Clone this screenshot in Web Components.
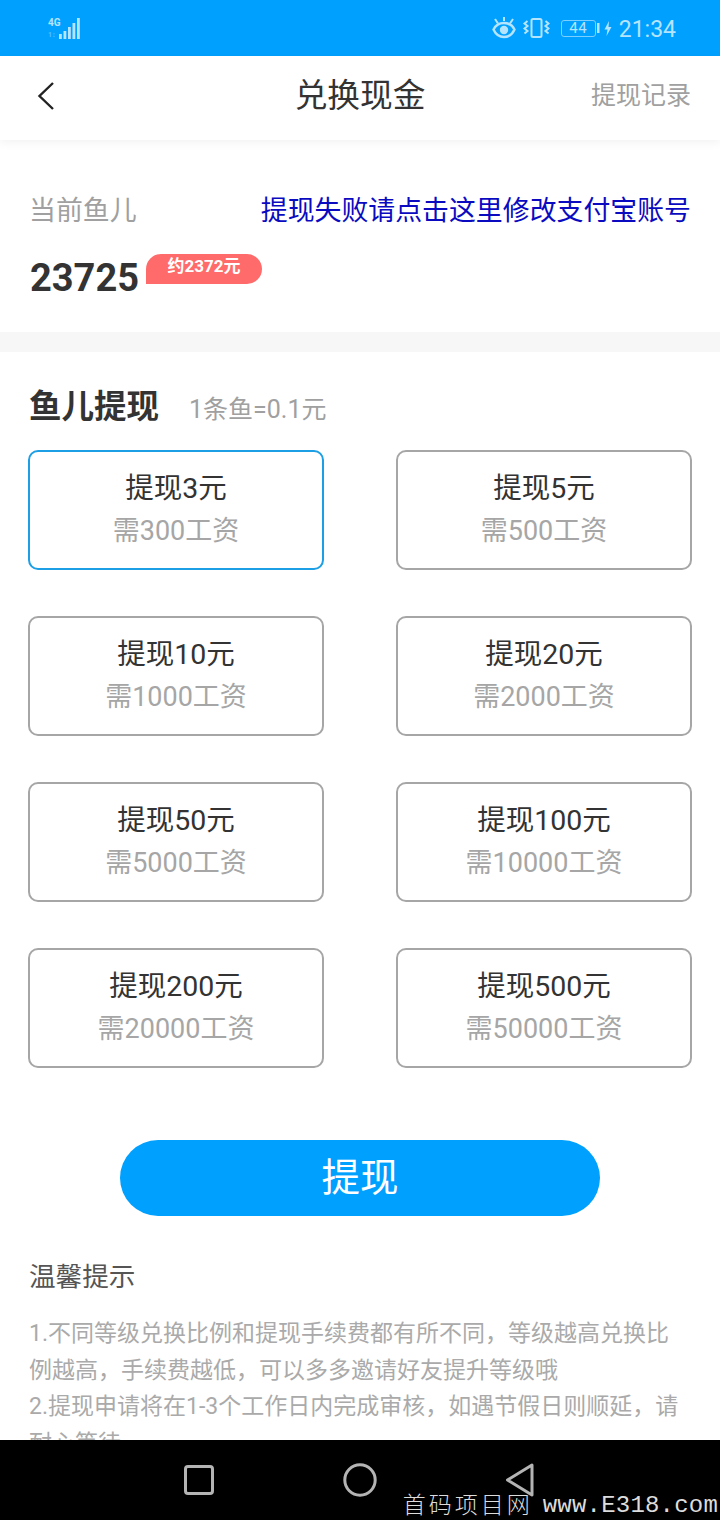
<!DOCTYPE html>
<html lang="zh">
<head>
<meta charset="utf-8">
<title>兑换现金</title>
<style>
  html, body { margin: 0; padding: 0; background: #fff; }
  body { font-family: Roboto, "Noto Sans CJK SC", sans-serif; }
</style>
</head>
<body>
<cash-page>
  <status-bar slot="status"></status-bar>
  <nav-header slot="header" title="兑换现金" action="提现记录"></nav-header>
  <balance-panel amount="23725" approx="约2372元"></balance-panel>
  <withdraw-options>
    <option-card title="提现3元" cost="需300工资" selected></option-card>
    <option-card title="提现5元" cost="需500工资"></option-card>
    <option-card title="提现10元" cost="需1000工资"></option-card>
    <option-card title="提现20元" cost="需2000工资"></option-card>
    <option-card title="提现50元" cost="需5000工资"></option-card>
    <option-card title="提现100元" cost="需10000工资"></option-card>
    <option-card title="提现200元" cost="需20000工资"></option-card>
    <option-card title="提现500元" cost="需50000工资"></option-card>
  </withdraw-options>
  <tips-panel>
    <div>1.不同等级兑换比例和提现手续费都有所不同，等级越高兑换比例越高，手续费越低，可以多多邀请好友提升等级哦</div>
    <div>2.提现申请将在1-3个工作日内完成审核，如遇节假日则顺延，请耐心等待</div>
  </tips-panel>
  <system-nav slot="nav"></system-nav>
</cash-page>

<script>
class CashPage extends HTMLElement {
  connectedCallback() {
    this.attachShadow({ mode: 'open' });
    this.shadowRoot.innerHTML = `
      <style>
        :host { display: flex; flex-direction: column; width: 720px; height: 1520px; overflow: hidden; position: relative; background: #fff; }
        .content { flex: 1; min-height: 0; overflow: hidden; }
      </style>
      <slot name="status"></slot>
      <slot name="header"></slot>
      <div class="content"><slot></slot></div>
      <slot name="nav"></slot>
    `;
  }
}

class StatusBar extends HTMLElement {
  connectedCallback() {
    this.attachShadow({ mode: 'open' });
    this.shadowRoot.innerHTML = `
      <style>
        :host { display: flex; align-items: center; justify-content: space-between; height: 56px; padding: 0 44px 0 48px; background: #00a0ff; color: #b5e4ff; flex: none; }
        .signal { display: flex; align-items: flex-end; height: 21px; }
        .net { display: flex; flex-direction: column; justify-content: space-between; height: 21px; font: 700 10px/10px Roboto, sans-serif; width: 11px; }
        .net span + span { opacity: .45; font-size: 7px; line-height: 7px; }
        .right { display: flex; align-items: center; height: 56px; }
        .batt { display: flex; align-items: center; margin: 0 0 0 11px; }
        .cell { box-sizing: border-box; width: 35px; height: 17px; border: 1px solid #7cd0ff; border-radius: 3px; font: 15px/15px Roboto, sans-serif; text-align: center; letter-spacing: .5px; }
        .time { font: 23px/52px Roboto, sans-serif; padding-top: 4px; margin-left: 7px; }
        svg { display: block; }
      </style>
      <div class="signal">
        <div class="net"><span>4G</span><span>1↕</span></div>
        <svg width="21" height="21" viewBox="0 0 21 21" fill="#b5e4ff">
          <rect x="0" y="16" width="2.800" height="5"/><rect x="4.500" y="13" width="2.800" height="8"/>
          <rect x="9" y="9" width="2.800" height="12"/><rect x="13.500" y="5" width="2.800" height="16"/>
          <rect x="18" y="0" width="2.800" height="21"/>
        </svg>
      </div>
      <div class="right">
        <svg width="24" height="22" viewBox="0 0 24 22" fill="none" stroke="#b5e4ff" stroke-width="2.400">
          <path d="M1.500 12.500C4 7.500 8 6 12 6s8 1.500 10.500 6.500C20 18 16 20 12 20s-8-2-10.500-7.500z"/>
          <circle cx="12" cy="13" r="4.200" fill="#b5e4ff" stroke="none"/>
          <path d="M3 2 6 6.500M21 2 18 6.500M12 0v4" stroke-width="2"/>
        </svg>
        <svg width="28" height="22" viewBox="0 0 28 22" fill="none" stroke="#b5e4ff" stroke-width="2" style="margin-left:6px">
          <rect x="9.500" y="2" width="10" height="18" rx="1.500"/>
          <path d="M5.500 4 2.500 6.500 5.500 9 2.500 11.500 5.500 14 2.500 16.500M23.500 4l3 2.500L23.500 9l3 2.500L23.500 14l3 2.500"/>
        </svg>
        <div class="batt">
          <div class="cell">44</div>
          <svg width="4" height="10" style="margin-left:1px"><rect width="2.500" height="10" fill="#b5e4ff"/></svg>
          <svg width="8" height="15" viewBox="0 0 8 15" fill="#b5e4ff" style="margin-left:3px"><path d="M5 0 .5 8.500h3L2.500 15 7.500 6h-3z"/></svg>
        </div>
        <span class="time">21:34</span>
      </div>
    `;
  }
}

class NavHeader extends HTMLElement {
  connectedCallback() {
    this.attachShadow({ mode: 'open' });
    this.shadowRoot.innerHTML = `
      <style>
        :host { display: grid; grid-template-columns: 1fr auto 1fr; align-items: center; box-sizing: border-box; height: 84px; padding: 0 29px 4px; background: #fff; box-shadow: 0 2px 10px rgba(0,0,0,.06); position: relative; z-index: 1; flex: none; }
        h1 { margin: 0; font: 400 32.700px/44px Roboto, "Noto Sans CJK SC", sans-serif; color: #333; }
        .action { justify-self: end; font-size: 25px; line-height: 36px; color: #a0a0a0; }
        svg { display: block; margin-left: 7px; }
      </style>
      <svg width="20" height="30" viewBox="0 0 20 30" fill="none" stroke="#222" stroke-width="2.400"><path d="M17 2 3.500 15 17 28"/></svg>
      <h1>${this.getAttribute('title')}</h1>
      <div class="action">${this.getAttribute('action')}</div>
    `;
  }
}

class BalancePanel extends HTMLElement {
  connectedCallback() {
    this.attachShadow({ mode: 'open' });
    this.shadowRoot.innerHTML = `
      <style>
        :host { display: block; box-sizing: border-box; height: 212px; padding: 48px 30px 0; border-bottom: 20px solid #f7f7f7; }
        .top { display: flex; justify-content: space-between; align-items: center; height: 40px; margin: 0 -1px; font-size: 26.900px; }
        .label { color: #a0a0a0; }
        .link { color: #0a0ac0; }
        .row { display: flex; align-items: flex-start; margin-top: 26px; }
        .amount { font: 700 38px/46px Roboto, sans-serif; color: #333; margin-top: 1px; }
        .badge { box-sizing: border-box; width: 116px; height: 30px; margin-left: 7px; border-radius: 15px 15px 15px 0; background: #ff6b6b; color: #fff; font-size: 17px; font-weight: 700; line-height: 24px; text-align: center; }
      </style>
      <div class="top"><span class="label">当前鱼儿</span><span class="link">提现失败请点击这里修改支付宝账号</span></div>
      <div class="row"><span class="amount">${this.getAttribute('amount')}</span><span class="badge">${this.getAttribute('approx')}</span></div>
    `;
  }
}

class WithdrawOptions extends HTMLElement {
  connectedCallback() {
    this.attachShadow({ mode: 'open' });
    this.shadowRoot.innerHTML = `
      <style>
        :host { display: block; padding: 30px 28px 0; }
        .head { display: flex; align-items: center; height: 50px; padding-left: 1px; }
        h2 { margin: 0; font: 700 32.500px/50px Roboto, "Noto Sans CJK SC", sans-serif; color: #333; }
        .rate { margin-left: 30px; font-size: 25px; color: #a0a0a0; }
        .grid { display: grid; grid-template-columns: 296px 296px; column-gap: 72px; row-gap: 46px; margin-top: 18px; }
        .cta { display: block; width: 480px; height: 76px; margin: 72px auto 0; border: 0; padding: 0; border-radius: 38px; background: #00a0ff; color: #fff; font: 38.500px/76px Roboto, "Noto Sans CJK SC", sans-serif; }
      </style>
      <div class="head"><h2>鱼儿提现</h2><span class="rate">1条鱼=0.1元</span></div>
      <div class="grid"><slot></slot></div>
      <button class="cta">提现</button>
    `;
  }
}

class OptionCard extends HTMLElement {
  connectedCallback() {
    this.attachShadow({ mode: 'open' });
    this.shadowRoot.innerHTML = `
      <style>
        :host { display: flex; flex-direction: column; align-items: center; box-sizing: border-box; height: 120px; padding-top: 16px; border: 2px solid #a6a6a6; border-radius: 10px; }
        :host([selected]) { border-color: #1d9fe6; }
        .t { font-size: 28.500px; line-height: 42px; color: #333; }
        .c { font-size: 27px; line-height: 42px; color: #a6a6a6; }
      </style>
      <div class="t">${this.getAttribute('title')}</div>
      <div class="c">${this.getAttribute('cost')}</div>
    `;
  }
}

class TipsPanel extends HTMLElement {
  connectedCallback() {
    this.attachShadow({ mode: 'open' });
    this.shadowRoot.innerHTML = `
      <style>
        :host { display: block; padding: 41px 30px 0 29px; }
        h3 { margin: 0 0 19px; font: 400 26.600px/40px Roboto, "Noto Sans CJK SC", sans-serif; color: #555; }
        .body { font-size: 23px; line-height: 36.500px; color: #aaa; }
      </style>
      <h3>温馨提示</h3>
      <div class="body"><slot></slot></div>
    `;
  }
}

class SystemNav extends HTMLElement {
  connectedCallback() {
    this.attachShadow({ mode: 'open' });
    this.shadowRoot.innerHTML = `
      <style>
        :host { display: flex; align-items: center; justify-content: center; gap: 128px; height: 80px; background: #000; position: relative; flex: none; }
        svg { display: block; fill: none; stroke: #b4b4b4; stroke-width: 3; }
        .mark { position: absolute; right: 2px; bottom: 0; display: flex; align-items: center; gap: 10px; height: 28px; color: #dcdcdc; white-space: pre; }
        .cn { font: 300 23px/28px "Noto Sans CJK SC", sans-serif; letter-spacing: 3px; margin-bottom: 6px; }
        .en { font: 24px/28px "Liberation Mono", monospace; letter-spacing: .2px; }
      </style>
      <svg width="32" height="32" viewBox="0 0 32 32"><rect x="2.500" y="2.500" width="27" height="27" rx="2.500"/></svg>
      <svg width="34" height="34" viewBox="0 0 34 34"><circle cx="17" cy="17" r="15.200"/></svg>
      <svg width="32" height="34" viewBox="0 0 32 34"><path d="M27 2 2.500 17 27 32z" stroke-linejoin="round"/></svg>
      <div class="mark"><span class="cn">首码项目网</span><span class="en">www.E318.com</span></div>
    `;
  }
}

customElements.define('cash-page', CashPage);
customElements.define('status-bar', StatusBar);
customElements.define('nav-header', NavHeader);
customElements.define('balance-panel', BalancePanel);
customElements.define('withdraw-options', WithdrawOptions);
customElements.define('option-card', OptionCard);
customElements.define('tips-panel', TipsPanel);
customElements.define('system-nav', SystemNav);
</script>
</body>
</html>
